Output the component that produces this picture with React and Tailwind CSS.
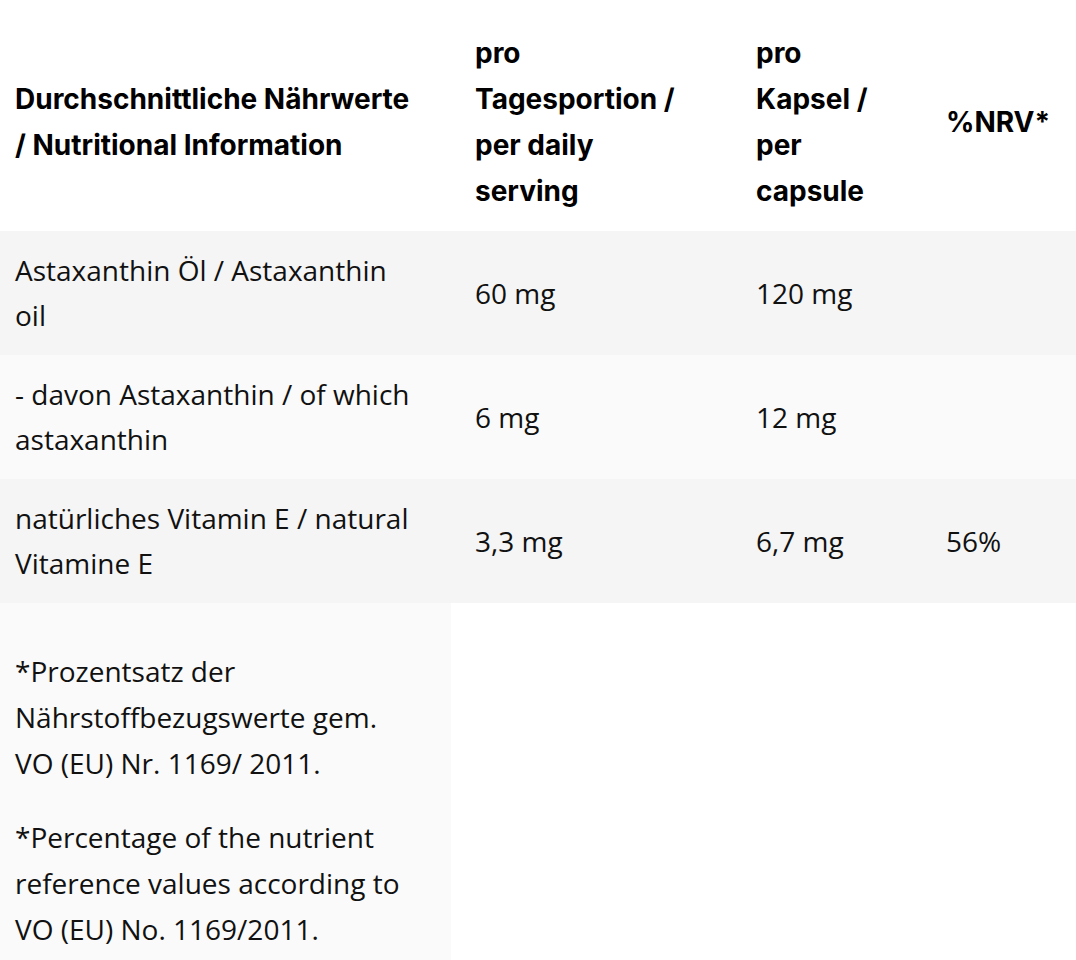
import React from "react";

const rows = [
  { name: ["Astaxanthin Öl / Astaxanthin", "oil"], a: "60 mg", b: "120 mg", c: "", bg: "bg-[#f5f5f5]" },
  { name: ["- davon Astaxanthin / of which", "astaxanthin"], a: "6 mg", b: "12 mg", c: "", bg: "bg-[#fafafa]" },
  { name: ["natürliches Vitamin E / natural", "Vitamine E"], a: "3,3 mg", b: "6,7 mg", c: "56%", bg: "bg-[#f5f5f5]" },
];

export default function App() {
  return (
    <div className="w-[1076px] min-h-[960px] bg-white overflow-hidden text-[#111] font-['Open_Sans',sans-serif]">
      <div className="grid grid-cols-[460px_281px_190px_1fr] items-center font-['Inter',sans-serif] font-bold text-[28px] leading-[46px] text-black pt-[30px] pb-[17px]">
        <div className="px-[15px]">Durchschnittliche Nährwerte<br />/ Nutritional Information</div>
        <div className="px-[15px]">pro<br />Tagesportion /<br />per daily<br />serving</div>
        <div className="px-[15px]">pro<br />Kapsel /<br />per<br />capsule</div>
        <div className="px-[15px]">%NRV*</div>
      </div>
      {rows.map((r, i) => (
        <div key={i} className={`grid grid-cols-[460px_281px_190px_1fr] items-center text-[28px] leading-[45px] py-[17px] ${r.bg}`}>
          <div className="px-[15px]">{r.name[0]}<br />{r.name[1]}</div>
          <div className="px-[15px]">{r.a}</div>
          <div className="px-[15px]">{r.b}</div>
          <div className="px-[15px]">{r.c}</div>
        </div>
      ))}
      <div className="w-[451px] bg-[#fafafa] px-[15px] pt-[17px] pb-[17px] text-[28px] leading-[46px]">
        <p className="my-[28px]">*Prozentsatz der<br />Nährstoffbezugswerte gem.<br />VO (EU) Nr. 1169/ 2011.</p>
        <p className="my-[28px]">*Percentage of the nutrient<br />reference values according to<br />VO (EU) No. 1169/2011.</p>
      </div>
    </div>
  );
}
